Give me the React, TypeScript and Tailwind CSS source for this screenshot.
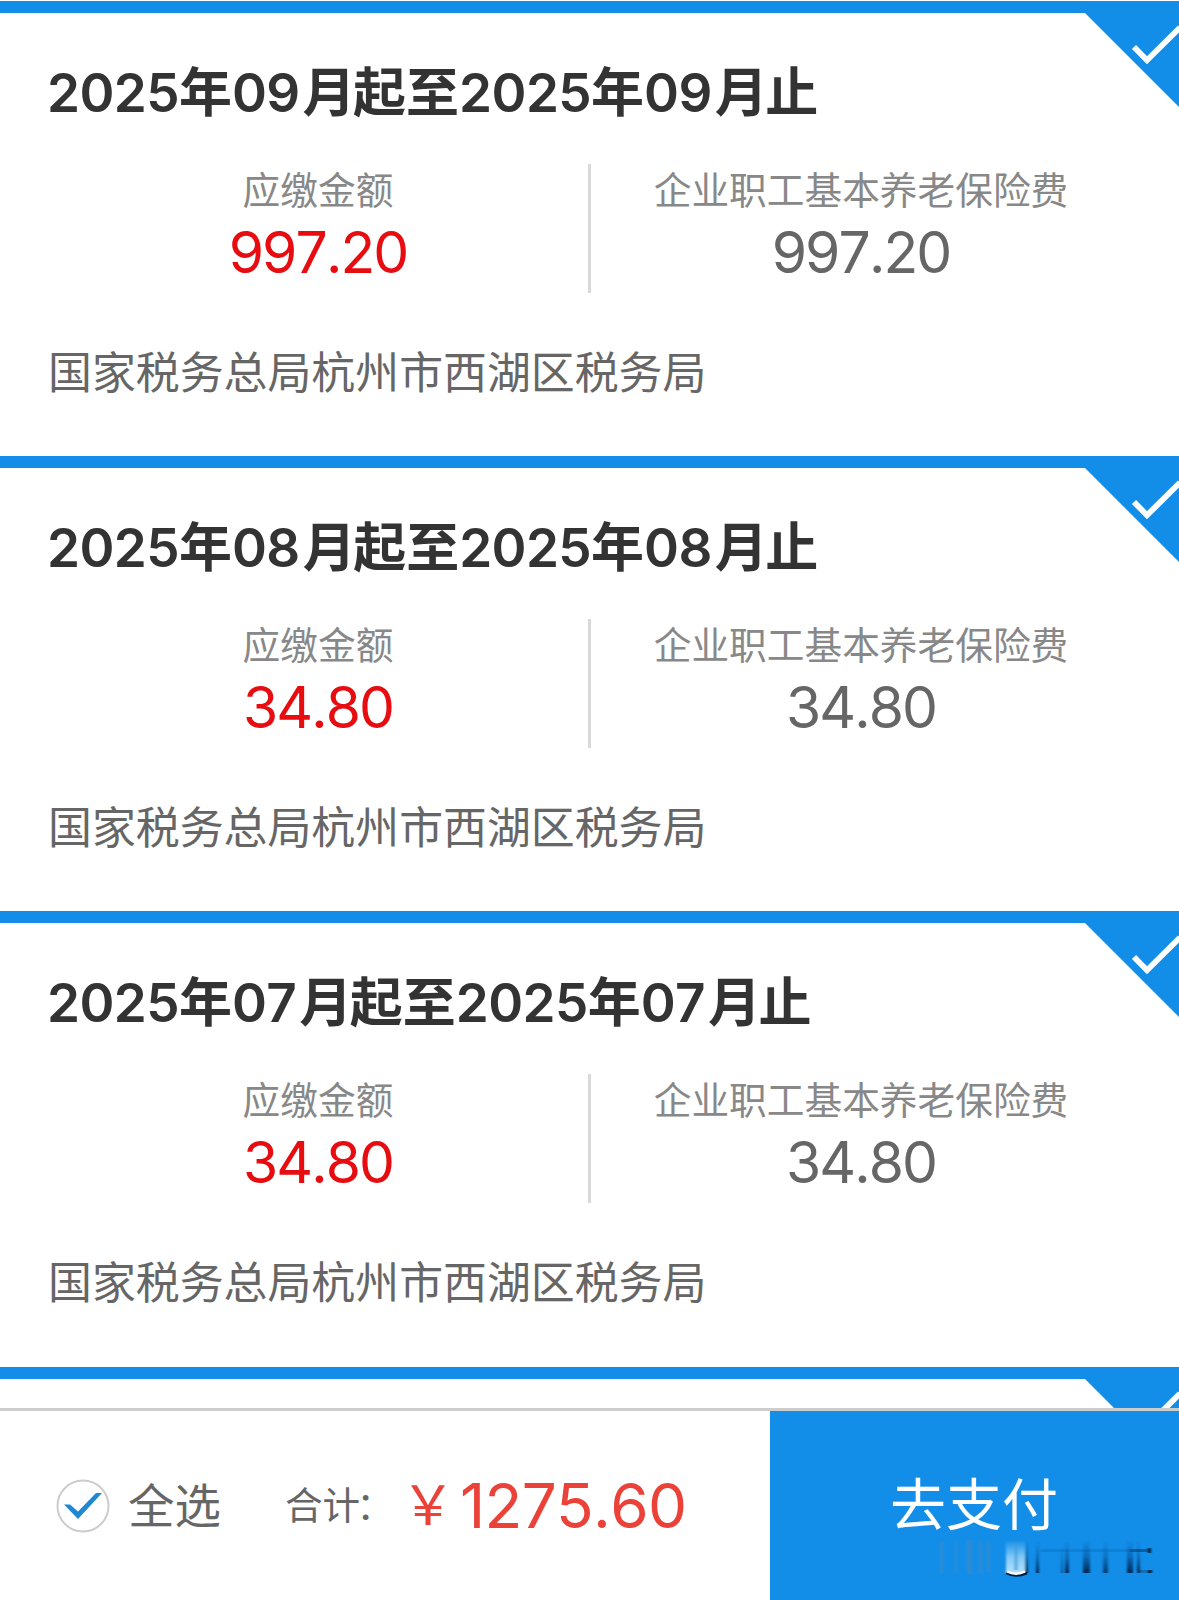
type Bill = {
  month: string
  amount: string
}

const bills: Bill[] = [
  { month: '09', amount: '997.20' },
  { month: '08', amount: '34.80' },
  { month: '07', amount: '34.80' },
]

function Corner() {
  return (
    <svg className="absolute right-0 top-0 w-[94px] h-[94px]" viewBox="0 0 94 94">
      <path d="M0 0H94V94Z" fill="#128ee9" />
      <path d="M49 34L62 47.2L95 14.5" fill="none" stroke="#fff" strokeWidth="5.8" />
    </svg>
  )
}

function Period({ month }: { month: string }) {
  return (
    <>
      <span className="tracking-[-0.6px]">2025</span>年<span className="tracking-[-0.6px] [font-kerning:none]">{month}</span>
      <span className="ml-[3px] -mr-[2.5px]">月</span>
    </>
  )
}

function Column({ label, amount, color }: { label: string; amount: string; color: string }) {
  return (
    <div className="flex-1 flex flex-col items-center">
      <div className="text-[37.7px] leading-[53px] text-[#888] whitespace-nowrap">{label}</div>
      <div className={`text-[57px] leading-[72px] tracking-[-1.9px] [font-kerning:none] ${color}`}>
        {amount}
      </div>
    </div>
  )
}

function BillCard({ bill }: { bill: Bill }) {
  return (
    <div className="h-[455.2px] shrink-0 border-t-12 border-[#128ee9] relative px-12">
      <Corner />
      <h2 className="-ml-px pt-[43px] text-[53px] leading-[74px] font-semibold text-[#333] whitespace-nowrap">
        <Period month={bill.month} />
        起至
        <Period month={bill.month} />止
      </h2>
      <div className="flex mt-[34px] h-[129px]">
        <Column label="应缴金额" amount={bill.amount} color="text-[#e60c10]" />
        <div className="w-[3px] bg-[#d9d9d9]" />
        <Column label="企业职工基本养老保险费" amount={bill.amount} color="text-[#666]" />
      </div>
      <div className="mt-[48px] text-[43.9px] leading-[64px] text-[#666]">国家税务总局杭州市西湖区税务局</div>
    </div>
  )
}

function Smudge() {
  return (
    <svg className="absolute left-[150px] top-[123px] w-[240px] h-[50px]" viewBox="920 1534 240 50">
      <defs>
        <linearGradient id="fade" x1="0" y1="0" x2="0" y2="1">
          <stop offset="0" stopColor="#06356b" stopOpacity="0" />
          <stop offset="0.5" stopColor="#06356b" stopOpacity="0.4" />
          <stop offset="1" stopColor="#04264f" />
        </linearGradient>
        <linearGradient id="shine" x1="0" y1="0" x2="0" y2="1">
          <stop offset="0" stopColor="#9ed8fa" stopOpacity="0" />
          <stop offset="0.5" stopColor="#9ed8fa" stopOpacity="0.8" />
          <stop offset="1" stopColor="#b8e4fb" />
        </linearGradient>
        <filter id="soft" x="-5%" y="-10%" width="110%" height="120%">
          <feGaussianBlur stdDeviation="1.1 0.6" />
        </filter>
      </defs>
      <g filter="url(#soft)">
        <g fill="#5c86ad" opacity="0.4">
          <rect x="940" y="1542" width="3" height="32" />
          <rect x="955" y="1542" width="2" height="32" />
          <rect x="967" y="1540" width="5" height="34" />
          <rect x="979" y="1542" width="3" height="32" />
          <rect x="987" y="1542" width="3" height="30" />
        </g>
        <rect x="1006" y="1540" width="19" height="34" fill="url(#shine)" />
        <rect x="1014" y="1544" width="4" height="26" fill="#3f9bdc" opacity="0.6" />
        <g fill="url(#fade)">
          <rect x="1025" y="1540" width="3" height="33" />
          <rect x="1036" y="1541" width="3" height="32" />
          <rect x="1061" y="1543" width="2" height="30" opacity="0.6" />
          <rect x="1065" y="1541" width="4" height="32" />
          <rect x="1083" y="1540" width="7" height="33" />
          <rect x="1103" y="1541" width="5" height="32" opacity="0.8" />
          <rect x="1127" y="1540" width="6" height="33" />
          <rect x="1137" y="1541" width="3" height="32" />
        </g>
        <rect x="1040" y="1549" width="111" height="3" fill="#0a4a8a" opacity="0.2" />
        <rect x="1130" y="1549" width="21" height="3" fill="#052a55" opacity="0.4" />
        <rect x="1140" y="1570" width="9" height="3" fill="#052a55" opacity="0.3" />
        <rect x="1148" y="1548" width="3" height="5" fill="#052040" />
        <rect x="1148" y="1570" width="4" height="3" fill="#052040" />
      </g>
      <path d="M1006 1573Q1016 1578 1027 1573" fill="none" stroke="#05203f" strokeWidth="2.5" />
      <path d="M1007 1571.5Q1016 1576 1025 1571.5" fill="none" stroke="#fff" strokeWidth="2.5" />
    </svg>
  )
}

export default function App() {
  return (
    <div className="w-[1179px] h-[1600px] overflow-hidden flex flex-col bg-white font-['Inter','Noto_Sans_CJK_SC',sans-serif]">
      <div className="h-[1408px] pt-px flex flex-col overflow-hidden">
        {bills.map((bill) => (
          <BillCard key={bill.month} bill={bill} />
        ))}
        {/* next card, still below the pay bar */}
        <div className="flex-1 border-t-12 border-[#128ee9] relative overflow-hidden">
          <Corner />
        </div>
      </div>

      {/* Bottom pay bar */}
      <div className="h-[192px] border-t-3 border-[#ccc] flex">
        <div className="w-[770px] flex items-center pl-[56px] whitespace-nowrap text-[#666]">
          <svg className="w-[54px] h-[54px] mt-px" viewBox="0 0 54 54">
            <circle cx="27" cy="27" r="25.5" fill="#fff" stroke="#ccc" strokeWidth="2" />
            <path d="M8 25.5H14L22 32.5L40 14H46L22 40Z" fill="#1f88d2" />
          </svg>
          <span className="ml-[18px] text-[46.5px] leading-[64px]">全选</span>
          <span className="ml-[64px] w-[114px] text-[37.6px] leading-[54px]">
            合计<span className="-ml-[4px]">：</span>
          </span>
          <span className="ml-[2px] w-[59px] text-[54px] leading-[64px] text-[#ea4238]">￥</span>
          <span className="text-[62px] leading-[76px] tracking-[-0.7px] [font-kerning:none] text-[#ea4238]">1275.60</span>
        </div>
        <div className="flex-1 bg-[#128ee9] relative">
          <div className="pt-[54px] pl-[120px] text-[56px] leading-[80px] text-white">去支付</div>
          <Smudge />
        </div>
      </div>
    </div>
  )
}
